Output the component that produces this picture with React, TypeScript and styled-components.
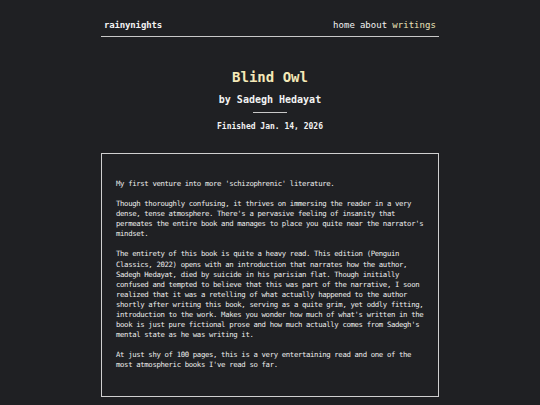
import styled, { createGlobalStyle } from "styled-components";

const GlobalStyle = createGlobalStyle`
  html, body {
    margin: 0;
    padding: 0;
    background: #1f2023;
  }
  body {
    color: #ececec;
    font-family: "DejaVu Sans Mono", "Liberation Mono", monospace;
  }
`;

const Page = styled.div`
  width: 338px;
  margin: 0 auto;
  padding-top: 14px;
`;

const Header = styled.header`
  align-items: center;
  border-bottom: 1px solid #c8c8c8;
  display: flex;
  height: 22px;
  justify-content: space-between;
  padding: 0 3px 0 3px;
`;

const Brand = styled.a`
  color: #f2f2f2;
  font-size: 9px;
  font-weight: 700;
  letter-spacing: -0.15px;
  text-decoration: none;
`;

const Nav = styled.nav`
  display: flex;
  gap: 5px;
`;

const NavItem = styled.a<{ $active?: boolean }>`
  color: ${({ $active }) => ($active ? "#ebe3b8" : "#f2f2f2")};
  font-size: 9px;
  letter-spacing: 0.05px;
  text-decoration: none;
`;

const Intro = styled.section`
  align-items: center;
  display: flex;
  flex-direction: column;
  padding-top: 31px;
`;

const Title = styled.h1`
  color: #f5e9b8;
  font-size: 14px;
  font-weight: 700;
  line-height: 18px;
  margin: 0;
`;

const Author = styled.h2`
  color: #f2f2f2;
  font-size: 10px;
  font-weight: 700;
  line-height: 14px;
  margin: 7px 0 0;
`;

const Rule = styled.hr`
  border: none;
  border-top: 1px solid #c8c8c8;
  margin: 5px 0 0;
  width: 34px;
`;

const Finished = styled.p`
  color: #f2f2f2;
  font-size: 8px;
  font-weight: 700;
  line-height: 12px;
  margin: 8px 0 0;
`;

const Review = styled.article`
  border: 1px solid #d0d0d0;
  box-sizing: border-box;
  margin-top: 20px;
  padding: 15px 12px 25px 14px;
  width: 338px;
`;

const Para = styled.p`
  color: #ededed;
  font-size: 7.3px;
  letter-spacing: -0.35px;
  line-height: 10.1px;
  margin: 10px 0 0;
`;

export default function App(): JSX.Element {
  return (
    <>
      <GlobalStyle />
      <Page>
        <Header>
          <Brand href="#">rainynights</Brand>
          <Nav>
            <NavItem href="#">home</NavItem>
            <NavItem href="#">about</NavItem>
            <NavItem href="#" $active>
              writings
            </NavItem>
          </Nav>
        </Header>
        <Intro>
          <Title>Blind Owl</Title>
          <Author>by Sadegh Hedayat</Author>
          <Rule />
          <Finished>Finished Jan. 14, 2026</Finished>
        </Intro>
        <Review>
          <Para>My first venture into more 'schizophrenic' literature.</Para>
          <Para>
            Though thoroughly confusing, it thrives on immersing the reader in
            a very dense, tense atmosphere. There's a pervasive feeling of
            insanity that permeates the entire book and manages to place you
            quite near the narrator's mindset.
          </Para>
          <Para>
            The entirety of this book is quite a heavy read. This edition
            (Penguin Classics, 2022) opens with an introduction that narrates
            how the author, Sadegh Hedayat, died by suicide in his parisian
            flat. Though initially confused and tempted to believe that this
            was part of the narrative, I soon realized that it was a retelling
            of what actually happened to the author shortly after writing this
            book, serving as a quite grim, yet oddly fitting, introduction to
            the work. Makes you wonder how much of what's written in the book
            is just pure fictional prose and how much actually comes from
            Sadegh's mental state as he was writing it.
          </Para>
          <Para>
            At just shy of 100 pages, this is a very entertaining read and one
            of the most atmospheric books I've read so far.
          </Para>
        </Review>
      </Page>
    </>
  );
}
